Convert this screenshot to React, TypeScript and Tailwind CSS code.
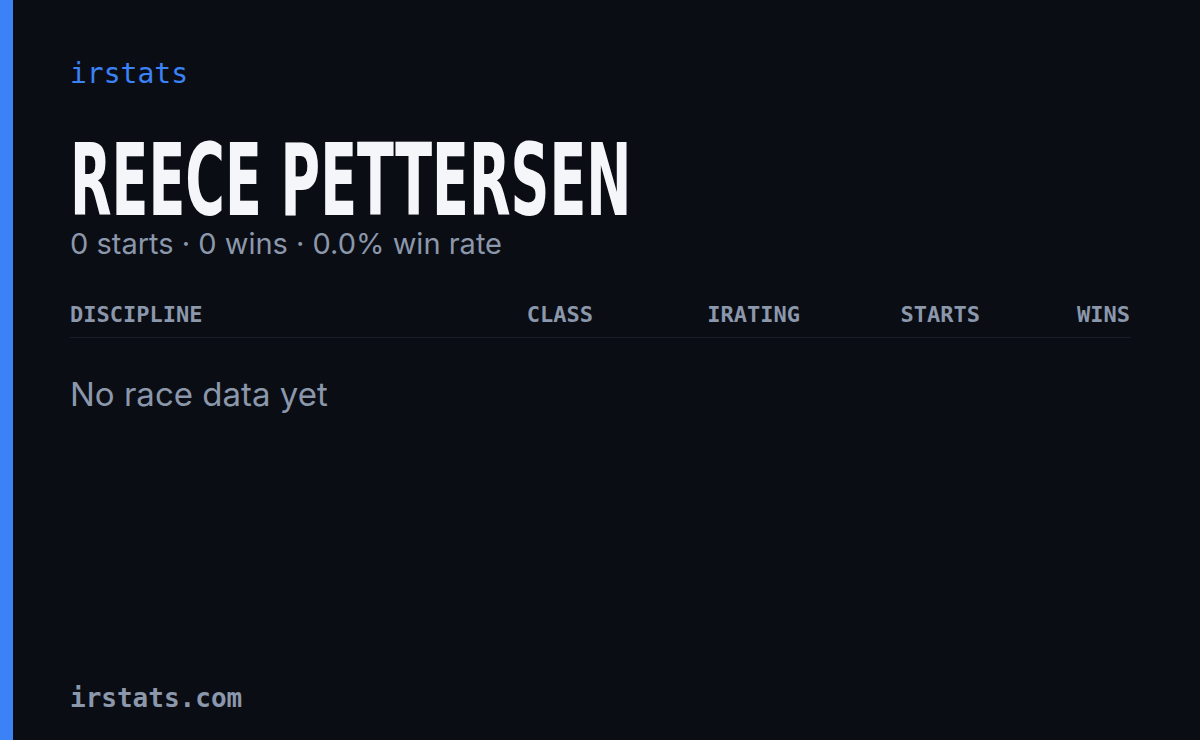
import React from "react";

export default function App() {
  return (
    <div className="flex h-[740px] w-[1200px] overflow-hidden bg-[#0a0d14]">
      <div className="w-[13px] shrink-0 bg-[#3b82f6]" />
      <div className="flex flex-1 flex-col pl-[57px] pr-[69px] pt-[56px] pb-[26px]">
        <div className="text-[28px] leading-[36px] font-normal text-[#3b82f6] font-['DejaVu_Sans_Mono',monospace]">irstats</div>
        <div className="mt-[44px] h-[90px]">
          <h1 className="inline-block origin-left scale-x-[0.6] whitespace-nowrap text-[100px] leading-[90px] font-bold text-[#f5f6fa] font-['Liberation_Sans_Narrow','DejaVu_Sans_Condensed',sans-serif]">
            REECE PETTERSEN
          </h1>
        </div>
        <div className="text-[29px] leading-[36px] text-[#8b97ab] font-['Inter',sans-serif]">
          0 starts · 0 wins · 0.0% win rate
        </div>
        <div className="mt-[39px] grid grid-cols-[1fr_140px_207px_180px_151px] border-b border-[#1a1e28] pb-[8px] text-[22px] leading-[28px] font-bold text-[#8b97ab] font-['DejaVu_Sans_Mono',monospace]">
          <div>DISCIPLINE</div>
          <div className="text-right">CLASS</div>
          <div className="text-right">IRATING</div>
          <div className="text-right">STARTS</div>
          <div className="text-right pr-[1px]">WINS</div>
        </div>
        <div className="mt-[36px] text-[33px] leading-[40px] text-[#8b97ab] font-['Inter',sans-serif]">No race data yet</div>
        <div className="mt-auto text-[26px] leading-[32px] font-bold text-[#8b97ab] font-['DejaVu_Sans_Mono',monospace]">irstats.com</div>
      </div>
    </div>
  );
}
